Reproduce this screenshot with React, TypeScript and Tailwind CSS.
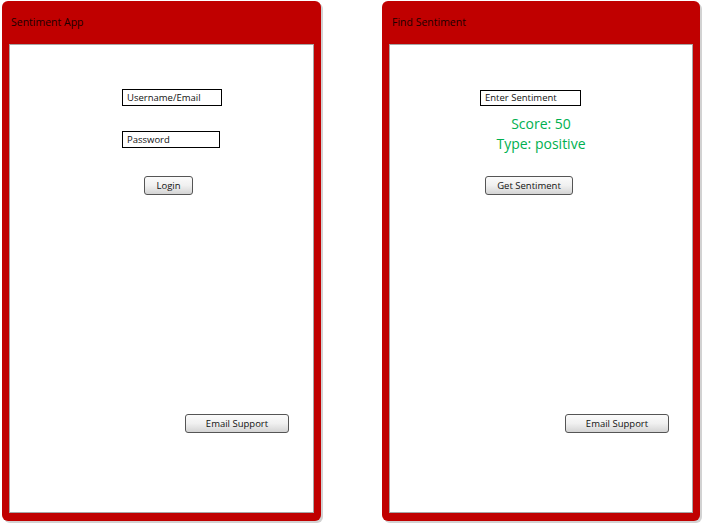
const font = { fontFamily: '"Open Sans", "Liberation Sans", sans-serif' };

function Field({ label, w, h }: { label: string; w: string; h: string }) {
  return (
    <div
      className={`${w} ${h} border border-black bg-white pl-[4px] flex items-center text-[9.5px] text-[#111] leading-none`}
    >
      {label}
    </div>
  );
}

function Btn({ label, className }: { label: string; className: string }) {
  return (
    <button
      className={`${className} h-[19px] rounded-[3px] border border-[#555] bg-gradient-to-b from-[#fbfbfb] via-[#f0f0f0] to-[#d4d4d4] text-[9.5px] text-[#111] leading-none flex items-center justify-center`}
    >
      {label}
    </button>
  );
}

function Panel({ title, titlePad, children }: { title: string; titlePad: string; children: React.ReactNode }) {
  return (
    <div className="w-full h-full bg-[#c00000] rounded-[6px] shadow-[2px_2px_0_#d2d2d2] flex flex-col">
      <div className={`h-[43px] flex items-center ${titlePad} text-[10.5px] text-[#1a0000]`}>{title}</div>
      <div className="flex-1 mx-[7px] mb-[8px] bg-white border border-[#a6a6a6] flex flex-col items-start">
        {children}
      </div>
    </div>
  );
}

export default function App() {
  return (
    <div className="w-[705px] h-[525px] bg-white flex items-start" style={font}>
      <div className="ml-[2px] mt-[1px] w-[319px] h-[520px]">
        <Panel title="Sentiment App" titlePad="pl-[9px]">
          <div className="ml-[112px] mt-[44px]">
            <Field label="Username/Email" w="w-[100px]" h="h-[17px]" />
          </div>
          <div className="ml-[112px] mt-[25px]">
            <Field label="Password" w="w-[98px]" h="h-[17px]" />
          </div>
          <Btn label="Login" className="ml-[134px] mt-[28px] w-[49px]" />
          <Btn label="Email Support" className="ml-[175px] mt-auto mb-[79px] w-[104px]" />
        </Panel>
      </div>
      <div className="ml-[61px] mt-[1px] w-[318px] h-[520px]">
        <Panel title="Find Sentiment" titlePad="pl-[10px]">
          <div className="ml-[90px] mt-[45px]">
            <Field label="Enter Sentiment" w="w-[101px]" h="h-[16px]" />
          </div>
          <div className="ml-[91px] mt-[8px] w-[120px] text-center text-[14px] leading-[20px] text-[#00b050]">
            <div>Score: 50</div>
            <div>Type: positive</div>
          </div>
          <Btn label="Get Sentiment" className="ml-[95px] mt-[22px] w-[88px]" />
          <Btn label="Email Support" className="ml-[175px] mt-auto mb-[79px] w-[104px]" />
        </Panel>
      </div>
    </div>
  );
}
